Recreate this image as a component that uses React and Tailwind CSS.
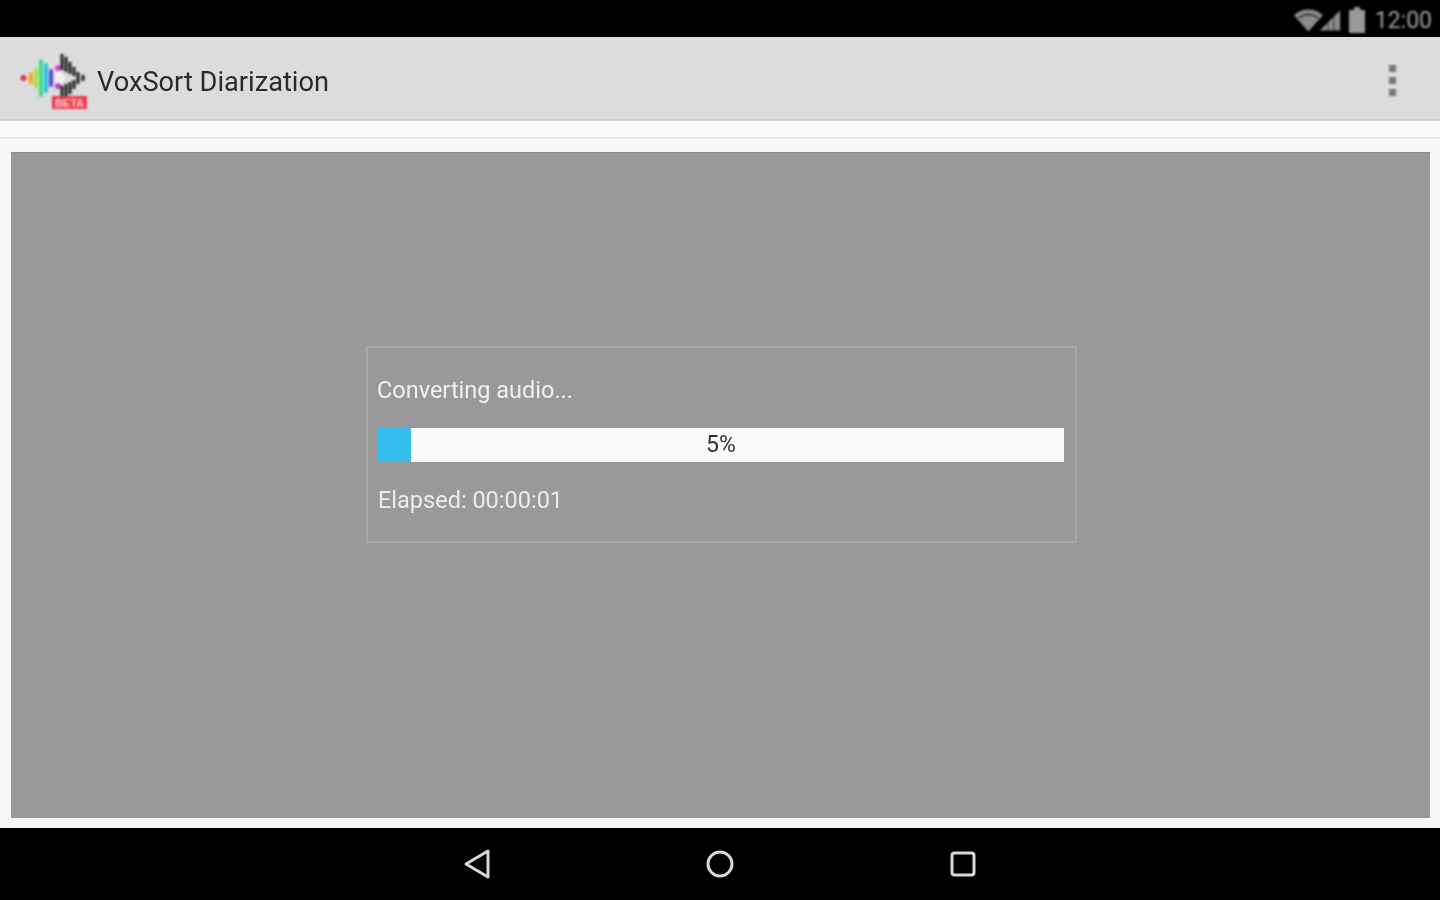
import React from 'react';

const font = { fontFamily: '"Roboto", "Liberation Sans", sans-serif' };

// logo: colored bars on the left, black bars on the right, beta tag underneath
const barrasColor = [
  { x: 12, h: 12, c: '#f0a830' },
  { x: 17, h: 20, c: '#a8e040' },
  { x: 22, h: 38, c: '#38e090' },
  { x: 27, h: 30, c: '#30c0e0' },
  { x: 32, h: 18, c: '#5050e0' },
];

const barrasNegro = [
  { x: 43, y1: 2, y2: 18 },
  { x: 47, y1: 5, y2: 20 },
  { x: 51, y1: 10, y2: 22 },
  { x: 55, y1: 15, y2: 24 },
  { x: 59, y1: 20, y2: 32 },
  { x: 64, y1: 23, y2: 29 },
  { x: 55, y1: 28, y2: 37 },
  { x: 51, y1: 30, y2: 42 },
  { x: 47, y1: 32, y2: 46 },
  { x: 43, y1: 34, y2: 48 },
];

const Logo = () => (
  <svg width="70" height="58" viewBox="0 0 70 58" className="blur-[0.8px]">
    <circle cx="4.5" cy="26" r="3" fill="#e8304a" />
    {barrasColor.map((b) => (
      <rect key={b.x} x={b.x - 2} y={26 - b.h / 2} width="4" height={b.h} rx="2" fill={b.c} />
    ))}
    <path d="M36 20h6l5 6-5 6h-6z" fill="#f6eef6" />
    <circle cx="39" cy="16" r="3" fill="#e040d0" />
    <circle cx="39" cy="34" r="3" fill="#c040c0" />
    {barrasNegro.map((b, i) => (
      <line key={i} x1={b.x} y1={b.y1} x2={b.x} y2={b.y2} stroke="#222" strokeWidth="3" />
    ))}
    <rect x="33" y="44" width="35" height="13" fill="#f03848" />
    <text x="50.5" y="55" textAnchor="middle" fontSize="11" fontWeight="700" fill="#f8d0d8" fontFamily="Liberation Sans, sans-serif">BETA</text>
  </svg>
);

const EstadoIconos = () => (
  <div className="flex items-center gap-[8px] mt-[3px] blur-[0.8px]">
    <svg width="48" height="24" viewBox="0 0 50 24">
      <path d="M1 7C9-1 23-1 31 7L16 24z" fill="#8c8c8c" />
      <path d="M6 10c6-5 14-5 20 0" stroke="#222" strokeWidth="1.5" fill="none" />
      <path d="M28 23L49 2v21z" fill="#8c8c8c" />
      <path d="M36 23V15h1v8zM42 23V9h1v14z" fill="#333" />
    </svg>
    <svg width="16" height="26" viewBox="0 0 16 26">
      <path d="M5 0h6v3h5v23H0V3h5z" fill="#999" />
    </svg>
    <span className="text-[23px] leading-none text-[#a0a0a0] ml-[2px]">12:00</span>
  </div>
);

const Navegacion = () => (
  <div className="h-[72px] bg-black flex items-center justify-center gap-[216px] pb-[1px] blur-[0.6px]">
    <svg width="26" height="30" viewBox="0 0 26 30">
      <path d="M24 2v26L2 15z" fill="none" stroke="#d8d8d8" strokeWidth="3" strokeLinejoin="round" />
    </svg>
    <svg width="28" height="28" viewBox="0 0 28 28">
      <circle cx="14" cy="14" r="12" fill="none" stroke="#d8d8d8" strokeWidth="3" />
    </svg>
    <svg width="26" height="26" viewBox="0 0 26 26">
      <rect x="2" y="2" width="22" height="22" rx="2.5" fill="none" stroke="#d8d8d8" strokeWidth="3" />
    </svg>
  </div>
);

const App = () => {
  return (
    <div className="w-[1440px] h-[900px] flex flex-col overflow-hidden bg-[#f7f7f7]" style={font}>
      {/* Barra de estado */}
      <div className="h-[37px] shrink-0 bg-black flex items-center justify-end pr-[8px]">
        <EstadoIconos />
      </div>

      {/* Barra de la aplicación */}
      <div className="h-[84px] shrink-0 bg-[#dcdcdc] border-b-2 border-[#d0d0d0] flex items-center justify-between pl-[19px] pr-[44px]">
        <div className="flex items-center gap-[8px]">
          <div className="mt-[5px]"><Logo /></div>
          <span className="text-[27.2px] leading-none text-[#2a2a2a] mt-[9px] blur-[0.7px]">VoxSort Diarization</span>
        </div>
        <div className="flex flex-col gap-[5px] mt-[5px] blur-[0.8px]">
          <span className="w-[7px] h-[7px] bg-[#777777]" />
          <span className="w-[7px] h-[7px] bg-[#777777]" />
          <span className="w-[7px] h-[7px] bg-[#777777]" />
        </div>
      </div>

      {/* Franja bajo la barra */}
      <div className="h-[18px] shrink-0 bg-[#fafafa] border-b-2 border-[#e8e8e8]" />

      {/* Contenido */}
      <div className="flex-1 bg-[#f7f7f7] pt-[13px] pb-[10px] pl-[11px] pr-[10px] flex min-h-0">
        <div className="flex-1 bg-[#999999] border-t border-[#8e8e8e] flex justify-center pt-[193px] pl-[2px]">
          <div className="w-[711px] h-[197px] border-2 border-[#a6a6a6] pl-[9px] pr-[11px] pt-[28px]">
            <p className="text-[23.5px] leading-[28px] text-[#f0f0f0] blur-[0.7px]">Converting audio...</p>
            <div className="relative mt-[24px] ml-[1px] h-[34px] bg-[#fafafa] flex items-center justify-center blur-[0.4px]">
              <div className="absolute left-0 top-0 bottom-0 w-[33px] bg-[#35bdee]" />
              <span className="text-[23px] text-[#333333] mt-[1px] blur-[0.4px]">5%</span>
            </div>
            <p className="mt-[24px] ml-[1px] text-[23.5px] leading-[28px] text-[#ececec] blur-[0.7px]">Elapsed: 00:00:01</p>
          </div>
        </div>
      </div>

      {/* Barra de navegación */}
      <Navegacion />
    </div>
  );
};

export default App;
